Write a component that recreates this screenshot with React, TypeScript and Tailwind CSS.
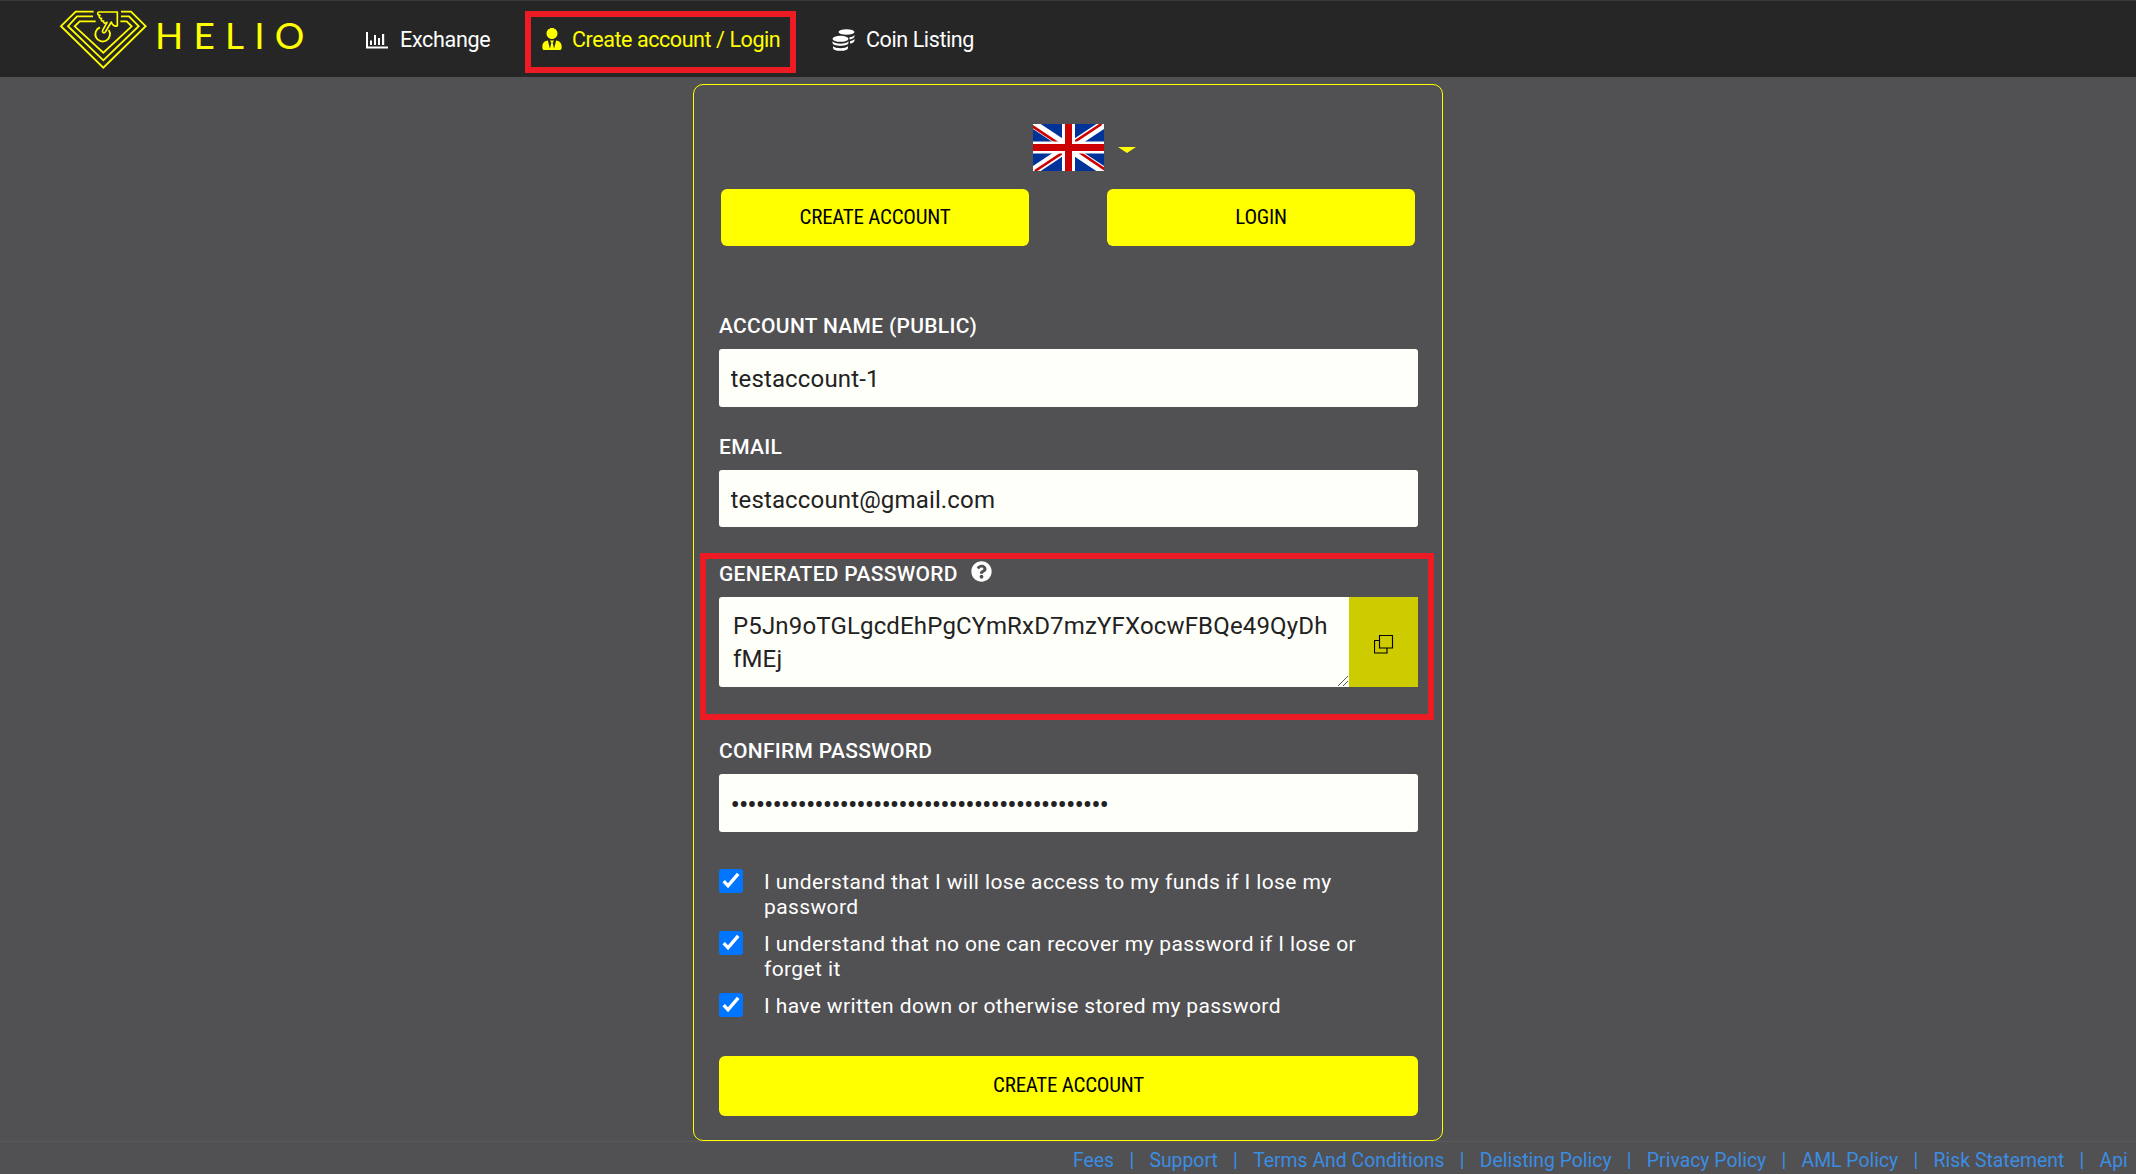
import { Fragment } from 'react';
import type { ReactNode } from 'react';
import { FaQuestionCircle, FaUserTie } from 'react-icons/fa';

const footerLinks = [
  'Fees',
  'Support',
  'Terms And Conditions',
  'Delisting Policy',
  'Privacy Policy',
  'AML Policy',
  'Risk Statement',
  'Api',
];

const statements = [
  'I understand that I will lose access to my funds if I lose my password',
  'I understand that no one can recover my password if I lose or forget it',
  'I have written down or otherwise stored my password',
];

const generated = 'P5Jn9oTGLgcdEhPgCYmRxD7mzYFXocwFBQe49QyDhfMEj';

function Logo() {
  return (
    <div className="flex items-start text-[#ffff00]">
      <svg className="h-[60px] w-[88px]" viewBox="57 28 264 180" fill="none" stroke="currentColor" strokeWidth="5.5">
        <path d="M161 36H107L63 79.500L190 204L317 79.500L273 36H243" />
        <path d="M159 50H111L84 79.500L190 182L296 79.500L267 50H243" />
        <path d="M167 65H119L104 80L190 159L275 80L260 65H241" />
        <path d="M180 83A22 22 0 1 0 206 91" />
        <path
          d="M175 37H232V78C225 82 217 77 214 67L196 97C192 102 185 98 188 92L201 68C195 73 189 70 191 64C185 65 181 61 185 56C178 56 175 51 180 47C173 46 171 41 175 37"
          strokeWidth="5"
          strokeLinejoin="round"
        />
      </svg>
      <span className="ml-[8px] font-[Lato] text-[37px] leading-[52px] tracking-[10.200px]">HELIO</span>
    </div>
  );
}

function ChartIcon() {
  return (
    <svg className="h-[17px] w-[22px]" viewBox="0 0 22 17" fill="currentColor">
      <path d="M0 0h2v14.500h20V16.500H0zM4 8.500h2V13H4zM8 3h2v10H8zM12 6h2v7h-2zM16 2h2.200v11H16z" />
    </svg>
  );
}

function CoinsIcon() {
  return (
    <svg className="h-[23px] w-[23px]" viewBox="0 0 23 23" fill="currentColor">
      <ellipse cx="14.500" cy="3" rx="8" ry="2.800" />
      <path d="M17.500 8.200c2.500-.3 4.500-1.200 5-2.500v1.600c0 1.500-2 2.700-5 3.100z" />
      <path d="M18 12.300c2.300-.4 4.200-1.300 4.500-2.500v1.600c0 1.500-2 2.700-4.500 3.100z" />
      <ellipse cx="8.500" cy="9.800" rx="8" ry="3" />
      <path d="M.5 12.200c1 1.600 4.200 2.500 8 2.500s7-.9 8-2.500v1.500c0 1.800-3.500 3.100-8 3.100s-8-1.300-8-3.100z" />
      <path d="M1 17.200c1.300 1.300 4.200 2 7.500 2s6.200-.7 7.500-2v1.700c0 1.700-3.300 2.900-7.500 2.900S1 20.600 1 18.900z" />
    </svg>
  );
}

function Flag() {
  return (
    <svg className="h-[47px] w-[71px]" viewBox="0 0 71 47">
      <path fill="#003399" d="M0 0h71v47H0z" />
      <path stroke="#fff" strokeWidth="8.500" d="M0 0L71 47M71 0L0 47" />
      <path stroke="#cc0000" strokeWidth="2.600" d="M-1 2L34 25.200M37 22L72 45.500M68.500 0L33.500 23.200M37 23.800L2 47" />
      <path fill="#fff" d="M29 0h13v47H29zM0 17.500h71v12H0z" />
      <path fill="#cc0000" d="M32 0h7v47h-7zM0 20h71v7H0z" />
    </svg>
  );
}

function CopyIcon() {
  return (
    <svg className="h-[19px] w-[20px]" viewBox="0 0 20 19" fill="none" stroke="#000" strokeWidth="1.150">
      <path d="M5.500 .5h13v12.500h-13z" />
      <path d="M5.500 5.500h-5v12.500h12.500v-5" />
    </svg>
  );
}

function Check() {
  return (
    <svg className="size-6 shrink-0 rounded-[3px] bg-[#0075ff]" viewBox="0 0 24 24" fill="none">
      <path d="M4.700 12.200L9 16.800L19.200 4.800" stroke="#fff" strokeWidth="3.400" />
    </svg>
  );
}

function Label({ children }: { children: ReactNode }) {
  return (
    <div className="flex h-[30px] items-center text-[21px] leading-[30px] font-medium tracking-[0.300px] text-white uppercase">
      {children}
    </div>
  );
}

const inputClass = 'mt-2 block w-full rounded-[3px] bg-[#fffffa] px-[11.500px] pt-[2px] text-[#222] outline-none';
const textInputClass = 'text-[24px] tracking-[0.150px]';
const buttonClass =
  'rounded-[6px] bg-[#ffff00] text-[21px] tracking-[-0.250px] text-black uppercase [font-stretch:75%]';

export default function App() {
  return (
    <div className="flex h-[1174px] w-[2136px] flex-col overflow-hidden bg-[#515052] font-[Roboto,sans-serif]">
      <header className="flex h-[77px] shrink-0 items-start border-t border-[#3a3a3a] bg-[#262626] pl-[59px] text-[21.500px] leading-[30px] text-white">
        <div className="mt-2 w-[307px]">
          <Logo />
        </div>
        <a className="mt-[24px] flex w-[159px] items-center gap-[12px] tracking-[-0.300px]">
          <ChartIcon />
          Exchange
        </a>
        <a className="mt-[10px] flex h-[62px] w-[271px] items-start border-6 border-[#ed1c24] pt-[8px] pl-[11px] tracking-[-0.430px] text-[#ffff00]">
          <FaUserTie className="mt-[3px] mr-[10px] h-[22px] w-[20px] shrink-0" />
          <span className="whitespace-nowrap">Create account / Login</span>
        </a>
        <a className="mt-[24px] ml-[36px] flex items-center gap-[11px] tracking-[-0.400px]">
          <CoinsIcon />
          Coin Listing
        </a>
      </header>

      <main className="mt-[7px] ml-[693px] h-[1057px] w-[750px] shrink-0 rounded-[10px] border border-[#ffff00] pr-[24px] pl-[25px]">
        <div className="mt-[39px] flex h-[47px] items-center pl-[314px]">
          <Flag />
          <span className="mt-[5px] ml-[14px] h-[6px] w-[18px] bg-[#ffff00] [clip-path:polygon(0_0,100%_0,50%_100%)]" />
        </div>
        <div className="mt-[18px] flex justify-between pr-[3px] pl-[2px]">
          <button className={`${buttonClass} h-[57px] w-[308px]`}>Create account</button>
          <button className={`${buttonClass} h-[57px] w-[308px]`}>Login</button>
        </div>

        <div className="mt-[65px]">
          <Label>Account name (public)</Label>
          <input readOnly className={`${inputClass} ${textInputClass} h-[58px]`} value="testaccount-1" />
        </div>
        <div className="mt-[25px]">
          <Label>Email</Label>
          <input readOnly className={`${inputClass} ${textInputClass} h-[57px]`} value="testaccount@gmail.com" />
        </div>

        <section className="mt-[26px] -mr-[16px] -ml-[19px] h-[167px] border-6 border-[#ed1c24] pr-[10px] pl-[13px]">
          <Label>
            Generated password
            <FaQuestionCircle className="mb-[5px] ml-[13px] size-[21px]" />
          </Label>
          <div className="mt-2 flex h-[90px]">
            <div className="relative w-[630px] rounded-l-[3px] bg-[#fffffa] pt-[13px] pr-[20px] pl-[14px] text-[24px] leading-[33px] tracking-[0.160px] break-all text-[#222]">
              {generated}
              <svg className="absolute right-px bottom-px size-[10px]" viewBox="0 0 10 10" stroke="#444" strokeWidth="0.900">
                <path d="M0 10L10 0M5 10L10 5" />
              </svg>
            </div>
            <button className="flex flex-1 items-center justify-center bg-[#cccc00] pt-1">
              <CopyIcon />
            </button>
          </div>
        </section>

        <div className="mt-[16px]">
          <Label>Confirm password</Label>
          <input
            readOnly
            type="password"
            className={`${inputClass} h-[58px] text-[28px] tracking-[-1.060px]`}
            value={generated}
          />
        </div>

        <div className="mt-[37px] flex flex-col gap-3 text-[21px] leading-[25px] tracking-[0.390px] text-white">
          {statements.map((text) => (
            <label key={text} className="flex items-start gap-[21px]">
              <Check />
              <span className="relative top-px w-[610px]">{text}</span>
            </label>
          ))}
        </div>
        <button className={`${buttonClass} mt-[38px] h-[60px] w-full`}>Create account</button>
      </main>

      <footer className="flex h-[33px] shrink-0 items-center border-t border-[#59595b] pt-[4px] pl-[1073px] text-[19.400px] leading-[29px] whitespace-nowrap text-[#3b8de2]">
        {footerLinks.map((link, i) => (
          <Fragment key={link}>
            {i > 0 && <span className="w-[35.300px] shrink-0 text-center">|</span>}
            <a>{link}</a>
          </Fragment>
        ))}
      </footer>
    </div>
  );
}
